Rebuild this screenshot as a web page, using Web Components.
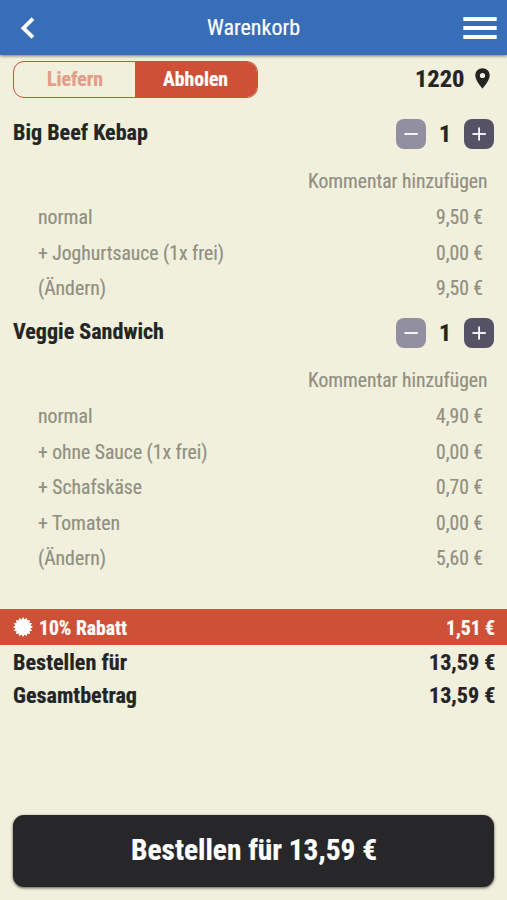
<!DOCTYPE html>
<html lang="de">
<head>
<meta charset="utf-8">
<title>Warenkorb</title>
<style>
html, body { margin: 0; height: 100%; }
body { background: #f0f0dc; color: #242424; overflow: hidden;
  font-family: "Roboto Condensed", Roboto, "Liberation Sans", sans-serif; font-stretch: 75%; -webkit-text-stroke: .2px currentColor; }
</style>
</head>
<body>
<cart-page></cart-page>
<script>
const define = (name, html, setup) => {
  const template = document.createElement('template');
  template.innerHTML = html;
  customElements.define(name, class extends HTMLElement {
    connectedCallback() {
      if (this.shadowRoot) return;
      this.attachShadow({ mode: 'open' }).append(template.content.cloneNode(true));
      if (setup) setup(this, this.shadowRoot);
    }
  });
};

/* A single line of text, condensed or widened to the width given in "w". */
define('fit-text', `
<style>
:host { display: block; flex: none; white-space: nowrap; line-height: 1.172; }
span { display: inline-block; transform-origin: 0 50%; vertical-align: top; }
</style><span><slot></slot></span>`, (host, root) => {
  const span = root.querySelector('span');
  const width = parseFloat(host.getAttribute('w'));
  host.style.width = width + 'px';
  span.style.transform = `scaleX(${width / span.getBoundingClientRect().width})`;
});

define('app-header', `
<style>
:host { display: grid; grid-template-columns: 60px 1fr 60px; align-items: center; height: 54.5px; box-sizing: border-box;
  background: #376eb7; color: #fff; font-size: 22px; box-shadow: 0 1px 3px rgba(0,0,0,.5); position: relative; }
svg { display: block; }
.menu { justify-self: end; margin-right: 10px; }
fit-text { justify-self: center; padding-top: 2px; }
</style>
<svg width="60" height="54" viewBox="0 0 60 54"><path d="M33 18.7 23.4 28.2 33 37.4" fill="none" stroke="#fff" stroke-width="3.8"/></svg>
<fit-text w="93"><slot></slot></fit-text>
<svg class="menu" width="34" height="54" viewBox="0 0 34 54"><path d="M0.3 19h33.4M0.3 28h33.4M0.3 37h33.4" stroke="#fff" stroke-width="3.8"/></svg>`);

define('mode-switch', `
<style>
:host { display: grid; grid-template-columns: 121.4px 1fr; width: 245px; height: 37px; box-sizing: border-box; border: 1px solid #ce5137;
  border-radius: 11px; overflow: hidden; font-size: 20px; font-weight: 700; }
div { display: flex; align-items: center; justify-content: center; padding-top: 2px; }
.off { color: #e39c85; }
.on { background: #ce5137; color: #fff; padding-right: 1px; }
</style>
<div class="off"><fit-text w="56">Liefern</fit-text></div>
<div class="on"><fit-text w="65">Abholen</fit-text></div>`);

define('order-bar', `
<style>
:host { display: flex; justify-content: space-between; height: 52.5px; padding: 6px 17px 0 13px; box-sizing: border-box; align-items: flex-start; }
.place { display: flex; align-items: center; gap: 10.5px; height: 36px; font-size: 23.5px; font-weight: 700; }
.place fit-text { padding-top: 2px; }
svg { display: block; }
</style>
<mode-switch></mode-switch>
<div class="place"><fit-text w="49.5"><slot></slot></fit-text>
<svg width="15" height="21" viewBox="0 0 15 21"><path fill-rule="evenodd" fill="#242424" d="M7.5.3C3.4.3.3 3.4.3 7.4.3 12.5 7.5 20.5 7.5 20.5S14.7 12.5 14.7 7.4C14.7 3.4 11.6.3 7.5.3ZM7.5 4.9A2.6 2.6 0 1 1 7.5 10.1 2.6 2.6 0 0 1 7.5 4.9Z"/></svg></div>`);

define('step-button', `
<style>
:host { display: block; width: 30.4px; height: 30px; border-radius: 8px; background: #565265; }
:host([minus]) { background: #9290a0; }
:host([minus]) .v { display: none; }
svg { display: block; }
</style>
<svg width="30" height="30" viewBox="0 0 30 30" stroke="#fff" stroke-width="1.8"><path d="M8.4 15h13.4"/><path class="v" d="M15.1 8.4v13.2"/></svg>`);

define('cart-item', `
<style>
:host { display: block; }
.head { display: flex; align-items: center; height: 54px; padding: 0 12.8px 0 12.5px; font-size: 22px; font-weight: 700; }
.name { flex: 1; margin-top: -3px; }
.count { width: 37.6px; display: flex; justify-content: center; font-size: 23.5px; padding-top: 2px; }
.note { display: flex; justify-content: flex-end; align-items: center; height: 39px; padding-right: 20px; font-size: 20px; color: #908f82; box-sizing: border-box; padding-top: 2.2px; }
</style>
<div class="head"><div class="name"><slot name="name"></slot></div>
<step-button minus></step-button><div class="count"><fit-text w="12.2">1</fit-text></div><step-button></step-button></div>
<div class="note"><fit-text w="179.5">Kommentar hinzufügen</fit-text></div>
<slot></slot>`);

define('option-row', `
<style>
:host { display: flex; justify-content: space-between; align-items: center; height: 35.4px; box-sizing: border-box; padding: .6px 24.5px 0 37.5px; font-size: 20px; color: #908f82; }
</style>
<slot></slot><fit-text w="47"><slot name="price"></slot></fit-text>`);

define('discount-bar', `
<style>
:host { display: flex; align-items: center; height: 36px; margin-top: 33.3px; padding: 0 12.3px 0 13px; background: #ce5137; color: #fff; font-size: 19.7px; font-weight: 700; }
svg { margin-right: 6px; }
fit-text { padding-top: 2px; }
.price { margin-left: auto; }
</style>
<svg width="20" height="20" viewBox="-10 -10 20 20"><polygon fill="#fff"/></svg>
<fit-text w="88">10% Rabatt</fit-text><fit-text class="price" w="49">1,51 €</fit-text>`, (host, root) => {
  /* Seal with 16 teeth. */
  const points = Array.from({ length: 32 }, (_, i) => {
    const r = i % 2 ? 7.7 : 10, a = i * Math.PI / 16;
    return (r * Math.sin(a)).toFixed(2) + ',' + (-r * Math.cos(a)).toFixed(2);
  });
  root.querySelector('polygon').setAttribute('points', points.join(' '));
});

define('total-row', `
<style>
:host { display: flex; justify-content: space-between; align-items: center; height: 33px; box-sizing: border-box; padding: 2px 12px 0 12.5px; font-size: 22px; font-weight: 700; }
</style>
<slot></slot><fit-text w="66.3"><slot name="price"></slot></fit-text>`);

define('order-button', `
<style>
:host { display: flex; align-items: center; justify-content: center; height: 72px; box-sizing: border-box; padding-bottom: .4px; margin: auto 13px 13.4px 13.2px; border-radius: 11px;
  background: #272729; color: #fff; font-size: 29.5px; font-weight: 700; box-shadow: 0 1px 3px rgba(0,0,0,.65); }
</style><fit-text w="246"><slot></slot></fit-text>`);

define('cart-page', `
<style>
:host { display: flex; flex-direction: column; height: 900px; width: 507px; }
app-header, order-bar, cart-item, discount-bar, total-row, order-button { flex: none; }
</style>
<app-header>Warenkorb</app-header>
<order-bar>1220</order-bar>
<cart-item><fit-text slot="name" w="135">Big Beef Kebap</fit-text>
  <option-row><fit-text w="54.5">normal</fit-text><span slot="price">9,50 €</span></option-row>
  <option-row><fit-text w="186">+ Joghurtsauce (1x frei)</fit-text><span slot="price">0,00 €</span></option-row>
  <option-row><fit-text w="68">(Ändern)</fit-text><span slot="price">9,50 €</span></option-row>
</cart-item>
<cart-item><fit-text slot="name" w="151">Veggie Sandwich</fit-text>
  <option-row><fit-text w="54.5">normal</fit-text><span slot="price">4,90 €</span></option-row>
  <option-row><fit-text w="169.5">+ ohne Sauce (1x frei)</fit-text><span slot="price">0,00 €</span></option-row>
  <option-row><fit-text w="104">+ Schafskäse</fit-text><span slot="price">0,70 €</span></option-row>
  <option-row><fit-text w="82">+ Tomaten</fit-text><span slot="price">0,00 €</span></option-row>
  <option-row><fit-text w="68">(Ändern)</fit-text><span slot="price">5,60 €</span></option-row>
</cart-item>
<discount-bar></discount-bar>
<total-row><fit-text w="114">Bestellen für</fit-text><span slot="price">13,59 €</span></total-row>
<total-row><fit-text w="124">Gesamtbetrag</fit-text><span slot="price">13,59 €</span></total-row>
<order-button>Bestellen für 13,59 €</order-button>`);
</script>
</body>
</html>
